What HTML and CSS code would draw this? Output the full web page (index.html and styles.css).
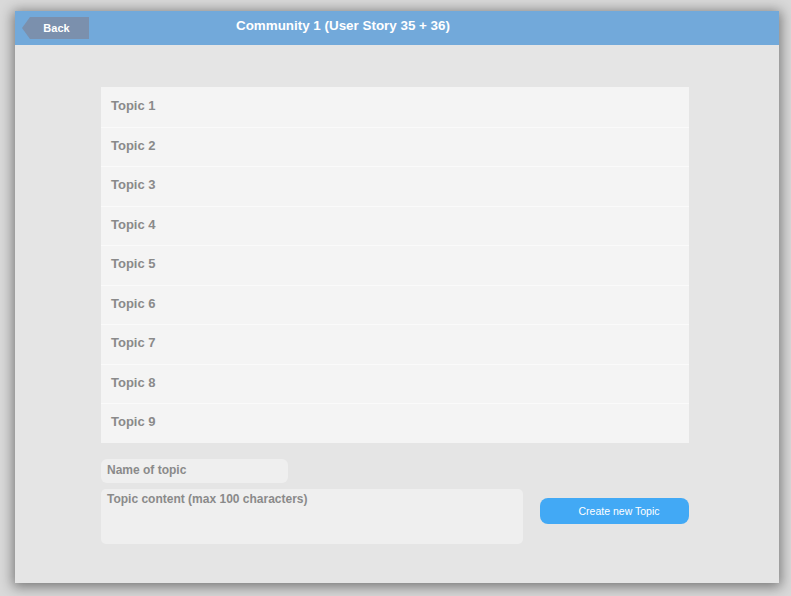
FILE: index.html
```html
<!DOCTYPE html>
<html>
<head>
<meta charset="utf-8">
<link rel="stylesheet" href="styles.css">
</head>
<body>
<div class="window">
  <header class="topbar">
    <div class="back">Back</div>
    <div class="title">Community 1 (User Story 35 + 36)</div>
  </header>
  <main class="content">
    <ul class="topics">
      <li>Topic 1</li>
      <li>Topic 2</li>
      <li>Topic 3</li>
      <li>Topic 4</li>
      <li>Topic 5</li>
      <li>Topic 6</li>
      <li>Topic 7</li>
      <li>Topic 8</li>
      <li>Topic 9</li>
    </ul>
    <div class="form">
      <div class="name-field">Name of topic</div>
      <div class="form-row">
        <div class="content-field">Topic content (max 100 characters)</div>
        <div class="create-btn">Create new Topic</div>
      </div>
    </div>
  </main>
</div>
</body>
</html>
```

FILE: styles.css
```css
html, body {
  margin: 0;
  padding: 0;
}
body {
  width: 791px;
  height: 596px;
  background: #d9d9d9;
  font-family: "Liberation Sans", Arial, sans-serif;
  overflow: hidden;
}
.window {
  margin: 11px 0 0 15px;
  width: 764px;
  height: 572px;
  background: #e5e5e5;
  box-shadow: 0 2px 12px 2px rgba(0, 0, 0, 0.45);
  display: flex;
  flex-direction: column;
}
.topbar {
  height: 34px;
  background: #72a9da;
  display: flex;
  align-items: flex-start;
  flex-shrink: 0;
}
.back {
  margin: 6px 0 0 7px;
  width: 67px;
  height: 22px;
  background: #7b90ad;
  clip-path: polygon(0 50%, 8px 0, 100% 0, 100% 100%, 8px 100%);
  color: #fff;
  font-size: 11px;
  font-weight: bold;
  line-height: 22px;
  text-align: center;
  padding-left: 2px;
  box-sizing: border-box;
}
.title {
  margin: 7px 0 0 147px;
  color: #fff;
  font-size: 13.4px;
  font-weight: bold;
  line-height: 16px;
}
.content {
  padding: 42px 0 0 86px;
}
.topics {
  list-style: none;
  margin: 0;
  padding: 0;
  width: 588px;
  background: #f4f4f4;
}
.topics li {
  height: 39.55px;
  box-sizing: border-box;
  border-top: 1px solid #fafafa;
  padding-left: 10px;
  line-height: 35px;
  font-size: 13px;
  font-weight: bold;
  color: #8a8a8a;
}
.topics li:first-child {
  border-top-color: #f4f4f4;
}
.form {
  margin-top: 16px;
  display: flex;
  flex-direction: column;
  gap: 6px;
}
.name-field {
  width: 187px;
  height: 24px;
  box-sizing: border-box;
  background: #efefef;
  border-radius: 6px;
  padding-left: 6px;
  line-height: 23px;
  font-size: 12px;
  font-weight: bold;
  color: #8a8a8a;
}
.form-row {
  display: flex;
  align-items: flex-start;
}
.content-field {
  width: 422px;
  height: 55px;
  box-sizing: border-box;
  background: #efefef;
  border-radius: 5px;
  padding: 3px 6px;
  font-size: 12px;
  font-weight: bold;
  line-height: 14px;
  color: #8a8a8a;
}
.create-btn {
  margin: 9px 0 0 17px;
  width: 149px;
  height: 26px;
  box-sizing: border-box;
  padding-left: 9px;
  border-radius: 8px;
  background: #42a9f5;
  color: #fff;
  font-size: 10.5px;
  line-height: 26px;
  text-align: center;
}
```
